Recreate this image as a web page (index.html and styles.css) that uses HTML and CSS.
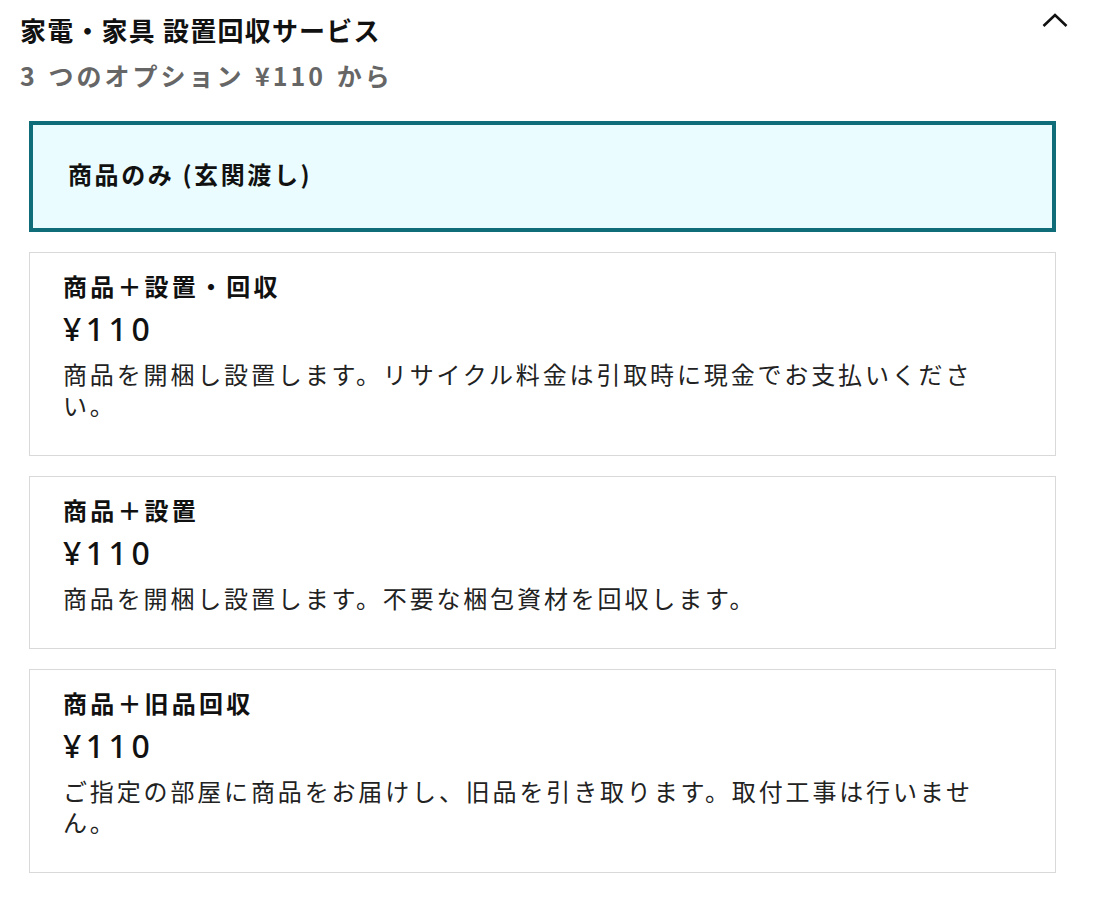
FILE: index.html
```html
<!DOCTYPE html>
<html lang="ja">
<head>
<meta charset="utf-8">
<link rel="stylesheet" href="styles.css">
</head>
<body>
<div class="panel">
  <div class="head">
    <div class="head-text">
      <div class="title">家電・家具 設置回収サービス</div>
      <div class="sub">3 つのオプション ¥110 から</div>
    </div>
    <svg class="chev" width="26" height="16" viewBox="0 0 26 16"><path d="M1.5 14 L13 3 L24.5 14" fill="none" stroke="#111" stroke-width="2.6"/></svg>
  </div>
  <div class="options">
    <div class="opt selected">
      <div class="opt-title">商品のみ (玄関渡し)</div>
    </div>
    <div class="opt">
      <div class="opt-title">商品＋設置・回収</div>
      <div class="price">¥110</div>
      <div class="desc">商品を開梱し設置します。リサイクル料金は引取時に現金でお支払いください。</div>
    </div>
    <div class="opt">
      <div class="opt-title">商品＋設置</div>
      <div class="price">¥110</div>
      <div class="desc">商品を開梱し設置します。不要な梱包資材を回収します。</div>
    </div>
    <div class="opt">
      <div class="opt-title">商品＋旧品回収</div>
      <div class="price">¥110</div>
      <div class="desc">ご指定の部屋に商品をお届けし、旧品を引き取ります。取付工事は行いません。</div>
    </div>
  </div>
</div>
</body>
</html>
```
FILE: styles.css
```css
html, body {
  margin: 0;
  padding: 0;
  background: #fff;
}
body {
  font-family: "Noto Sans CJK JP", "Noto Sans", sans-serif;
  color: #111;
}
.panel {
  padding: 12px 44px 0 20px;
}
.head {
  display: flex;
  justify-content: space-between;
  align-items: flex-start;
}
.title {
  font-size: 26px;
  font-weight: 700;
  line-height: 36px;
  letter-spacing: 1.2px;
}
.sub {
  margin-top: 9px;
  font-size: 25px;
  font-weight: 700;
  line-height: 36px;
  color: #666;
  letter-spacing: 3px;
  word-spacing: 2px;
}
.chev {
  margin-top: 0;
  margin-right: -12px;
}
.options {
  margin-top: 28px;
  margin-left: 9px;
  margin-right: 0;
  display: flex;
  flex-direction: column;
  gap: 20px;
}
.opt {
  border: 1px solid #d9d9d9;
  padding: 17px 70px 35px 33px;
}
.opt.selected {
  border: 4px solid #0f6d79;
  background: #eafcff;
  padding: 33px 36px 38px 35px;
}
.opt-title {
  font-size: 24px;
  font-weight: 700;
  line-height: 32px;
  letter-spacing: 3.2px;
}
.selected .opt-title {
  letter-spacing: 2.6px;
}
.price {
  margin-top: 10px;
  font-family: "Noto Sans", sans-serif;
  font-size: 32px;
  font-weight: 500;
  line-height: 34px;
  letter-spacing: 4.5px;
}
.desc {
  margin-top: 12px;
  font-size: 24px;
  line-height: 31px;
  letter-spacing: 2.85px;
  color: #222;
}
```
